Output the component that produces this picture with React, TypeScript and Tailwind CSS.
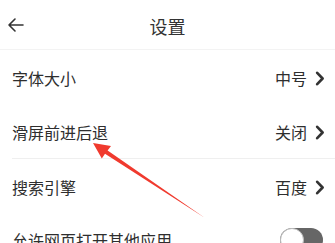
import React from "react";

const font = { fontFamily: '"Noto Sans CJK SC", "Noto Sans", sans-serif' };

function Row({ label, value, h }: { label: string; value: string; h: string }) {
  return (
    <div className={`flex items-center justify-between pl-3 pr-[10px] ${h}`}>
      <span className="text-[16px] text-[#2e2e2e]">{label}</span>
      <div className="flex items-center gap-[8px]">
        <span className="text-[16px] text-[#2e2e2e]">{value}</span>
        <svg width="10" height="15" viewBox="0 0 10 15" fill="none">
          <path d="M2.2 1.8 L7.6 7.5 L2.2 13.2" stroke="#333" strokeWidth="2.6" strokeLinecap="round" strokeLinejoin="round" />
        </svg>
      </div>
    </div>
  );
}

export default function App() {
  return (
    <div className="relative h-[243px] w-[335px] overflow-hidden bg-white" style={font}>
      <div className="relative flex h-[50px] items-center justify-center border-b border-[#f3f3f3] pt-[4px]">
        <svg className="absolute left-[7px] top-[17px]" width="17" height="16" viewBox="0 0 17 16" fill="none">
          <path d="M16 8 H2 M8 2 L2 8 L8 14" stroke="#333" strokeWidth="1.6" strokeLinecap="round" strokeLinejoin="round" />
        </svg>
        <span className="text-[18px] text-[#333]">设置</span>
      </div>
      <Row label="字体大小" value="中号" h="h-[56px]" />
      <Row label="滑屏前进后退" value="关闭" h="h-[52px]" />
      <div className="ml-3 h-px bg-[#efefef]" />
      <Row label="搜索引擎" value="百度" h="h-[56px]" />
      <div className="flex h-[50px] items-center justify-between pl-3 pr-[12px]">
        <span className="text-[16px] text-[#2e2e2e]">允许网页打开其他应用</span>
        <div className="relative h-[24px] w-[43px] rounded-full bg-[#666]">
          <div className="absolute left-0 top-0 h-[24px] w-[24px] rounded-full border border-[#bbb] bg-white" />
        </div>
      </div>
      <svg className="pointer-events-none absolute left-0 top-0" width="335" height="243">
        <polygon
          points="93,143 111,146 107.6,150.4 205,218 105,153.8 101.8,158.5"
          fill="#f03a2e"
        />
      </svg>
    </div>
  );
}
